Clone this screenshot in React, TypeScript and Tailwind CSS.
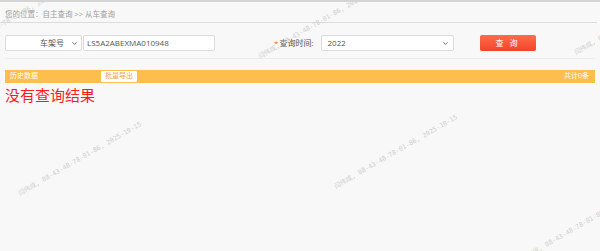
import { ChevronDown } from 'lucide-react';

const watermarkText = '闫伟成, 08-43-48-78-01-86, 2025-10-15';

// centres of the tiled watermark
const marks = [
  { x: 10, y: 18 },
  { x: 320, y: 20 },
  { x: 636, y: 16 },
  { x: 80, y: 157 },
  { x: 396, y: 150 },
  { x: 583, y: 222 },
];

function Watermarks() {
  return (
    <>
      {marks.map((m, i) => (
        <div
          key={i}
          className="pointer-events-none absolute whitespace-nowrap text-[6.5px] leading-none text-[#cfcfcf] select-none"
          style={{
            left: m.x,
            top: m.y,
            transform: 'translate(-50%, -50%) rotate(-30deg)',
            fontFamily: '"DejaVu Sans Mono", "Noto Sans CJK SC", monospace',
          }}
        >
          {watermarkText}
        </div>
      ))}
    </>
  );
}

export default function App() {
  return (
    <div
      className="relative h-[251px] w-[600px] overflow-hidden border-t-2 border-[#d4d4d4] bg-[#f8f8f8]"
      style={{ fontFamily: '"Open Sans", "Noto Sans CJK SC", sans-serif' }}
    >
      {/* Breadcrumb */}
      <div className="mr-[3px] flex h-[21px] items-center border-b border-[#dcdcdc] pl-[5px] pt-[5px] text-[7.5px] text-[#a0a0a0]">
        您的位置：自主查询 &gt;&gt; 从车查询
      </div>

      {/* Search row */}
      <div className="mx-[5px] mt-[12px] flex h-[16px] items-center">
        <div className="flex h-[16px] w-[77px] items-center justify-end rounded-[2px] border border-[#dcdcdc] bg-white pr-[3px] text-[8px] text-[#555]">
          <span className="mr-[7px]">车架号</span>
          <ChevronDown size={7} strokeWidth={3} className="text-[#555]" />
        </div>
        <div className="ml-[1px] flex h-[16px] w-[132px] items-center rounded-[2px] border border-[#dcdcdc] bg-white pl-[3px] text-[8px] text-[#555]">
          LS5A2ABEXMA010948
        </div>
        <div className="ml-[59px] flex items-center text-[8px] text-[#555]">
          <span className="mr-[1px] text-[#ff6a00]">*</span>
          <span>查询时间:</span>
        </div>
        <div className="ml-[7px] flex h-[16px] w-[133px] items-center justify-between rounded-[2px] border border-[#dcdcdc] bg-white pl-[6px] pr-[4px] text-[8px] text-[#555]">
          <span>2022</span>
          <ChevronDown size={7} strokeWidth={3} className="text-[#555]" />
        </div>
        <button
          type="button"
          className="ml-[26px] flex h-[16px] w-[56px] items-center justify-center rounded-[2px] bg-gradient-to-b from-[#ff6b4a] to-[#f3432a] text-[8px] tracking-[2px] text-white"
        >
          查 询
        </button>
      </div>
      <div className="mx-[5px] mt-[7px] border-b border-[#ececec]" />

      {/* Result bar */}
      <div className="mx-[5px] mt-[11px] flex h-[13px] items-center justify-between bg-[#fdbe4d] pl-[5px] pr-[6px] text-[7px] text-white">
        <div className="flex items-center">
          <span>历史数据</span>
          <span className="ml-[63px] flex h-[11px] w-[36px] items-center justify-center rounded-[1px] bg-white text-[7px] text-[#f7a04a]">
            批量导出
          </span>
        </div>
        <span>共计0条</span>
      </div>

      <div className="ml-[5px] mt-[4px] text-[15px] leading-[17px] text-[#ff1a1a]">没有查询结果</div>

      <Watermarks />
    </div>
  );
}
